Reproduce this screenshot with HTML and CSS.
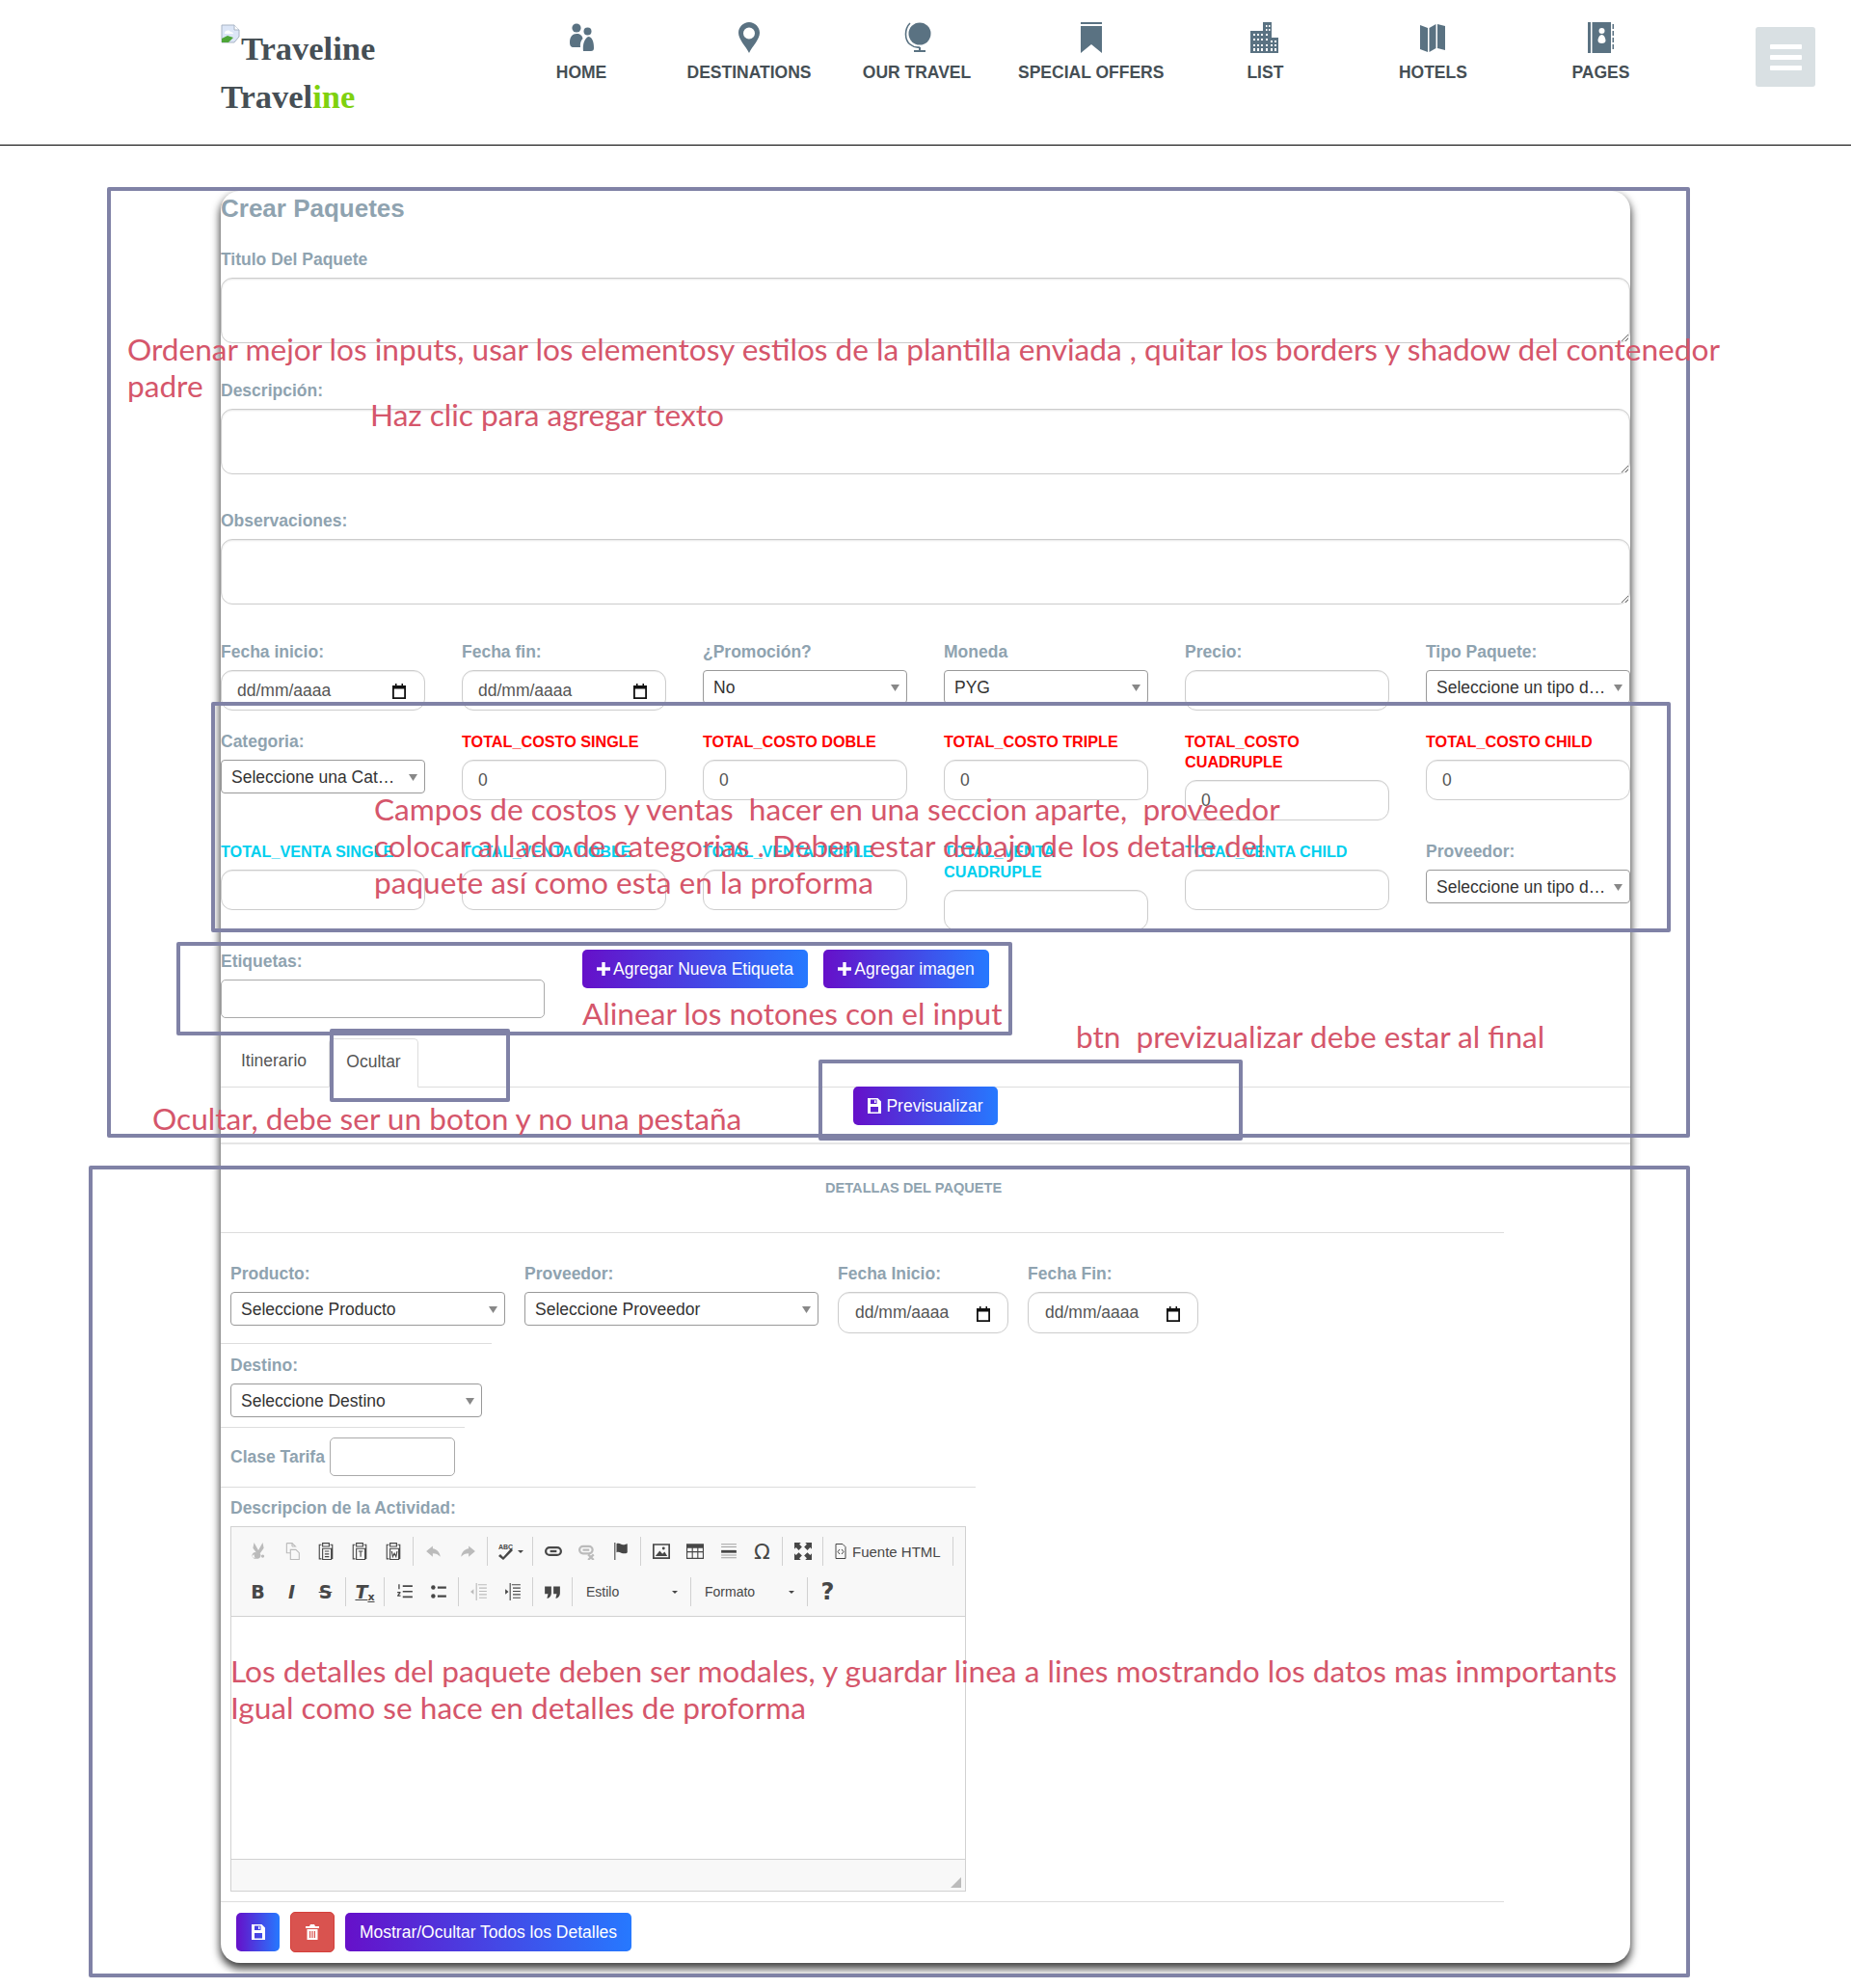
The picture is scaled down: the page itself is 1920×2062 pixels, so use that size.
FILE: index.html
```html
<!DOCTYPE html>
<html lang="es">
<head>
  <meta charset="UTF-8">
  <meta name="viewport" content="width=device-width, initial-scale=1.0">
  <title>Crear Paquetes - Traveline</title>
  <link rel="stylesheet" href="styles.css">
</head>
<body>
  <header class="header">
    <div class="logo">
      <div class="logo-alt">
        <svg class="broken-img" viewBox="0 0 20 20" width="20" height="20"><path d="M1 1h13l5 5v7l-5 6H1z" fill="#dce6f7" stroke="#a8b4c4"/><path d="M14 1v5h5" fill="#fff" stroke="#a8b4c4"/><path d="M4 9c1-3 5-3 6-1 2 0 3 1 3 2H4z" fill="#fff"/><path d="M1 19v-4l6-3 6 2-5 5z" fill="#4ea638"/></svg><span>Traveline</span>
      </div>
      <div class="logo-text">Travel<span class="logo-green">ine</span></div>
    </div>
    <nav class="nav">
      <a class="nav-item">
        <svg viewBox="0 0 32 32" width="32" height="32"><circle cx="11" cy="6" r="4.6"/><circle cx="22.5" cy="9.5" r="4"/><path d="M4 21c0-6 3-9 7-9s6 2 6.5 5c-2 2-3 5-2.500 9H8c-3 0-4-2-4-5z"/><path d="M18 30c-.8-6 .5-12 5-15 4.500 0 6 6 6 12 0 2-1 3-3 3z"/></svg>
        <span>HOME</span>
      </a>
      <a class="nav-item">
        <svg viewBox="0 0 32 32" width="32" height="32"><path fill-rule="evenodd" d="M16 0c6 0 11 5 11 11 0 7-7 13-11 21-4-8-11-14-11-21C5 5 10 0 16 0zm0 5.500a6 6 0 1 0 0 12 6 6 0 0 0 0-12z"/></svg>
        <span>DESTINATIONS</span>
      </a>
      <a class="nav-item">
        <svg viewBox="0 0 32 32" width="32" height="32"><circle cx="19" cy="12" r="11.500"/><path d="M9 1C3 7 3 18 9 23c3 2.500 7 3.500 10 3" fill="none" stroke="#5a7282" stroke-width="1.600"/><path d="M18 26h2v3h5v2H13v-2h5z"/></svg>
        <span>OUR TRAVEL</span>
      </a>
      <a class="nav-item">
        <svg viewBox="0 0 32 32" width="32" height="32"><path d="M5 0h22v2H5zM5 4h22v28l-11-9-11 9z"/></svg>
        <span>SPECIAL OFFERS</span>
      </a>
      <a class="nav-item">
        <svg viewBox="0 0 32 32" width="32" height="32"><path fill-rule="evenodd" d="M14 0h9v16h7v16H1V9h13zM17 3v2h1.500V3zM20 3v2h1.500V3zM17 7v2h1.500V7zM20 7v2h1.500V7zM4 12v2h2v-2zM8 12v2h2v-2zM12 12v2h2v-2zM17 12v2h2v-2zM4 17v2h2v-2zM8 17v2h2v-2zM12 17v2h2v-2zM17 17v2h2v-2zM22 19v2h2v-2zM26 19v2h2v-2zM4 23v2h2v-2zM8 23v2h2v-2zM12 23v2h2v-2zM17 23v2h2v-2zM22 23v2h2v-2zM26 23v2h2v-2zM4 27v3h2v-3zM8 27v3h2v-3zM12 27v3h2v-3zM17 27v3h2v-3zM22 27v3h2v-3zM26 27v3h2v-3z"/></svg>
        <span>LIST</span>
      </a>
      <a class="nav-item">
        <svg viewBox="0 0 32 32" width="32" height="32"><path d="M3 3l8 3v25l-8-3zM12.500 6l7-4v25l-7 4zM21 2l8 2v25l-8-2z"/></svg>
        <span>HOTELS</span>
      </a>
      <a class="nav-item">
        <svg viewBox="0 0 32 32" width="32" height="32"><path d="M3 0h3v32H3z"/><path fill-rule="evenodd" d="M7.500 0H27v32H7.500zM17.500 6a3 3 0 1 0 0 6 3 3 0 0 0 0-6zm0 7c-2.500 0-4 4-4 6 0 2 1.500 3 4 3s4-1 4-3c0-2-1.500-6-4-6z"/><path d="M28.500 2H30v5h-1.500zM28.500 9H30v5h-1.500zM28.500 16H30v5h-1.500zM28.500 23H30v5h-1.500z"/></svg>
        <span>PAGES</span>
      </a>
    </nav>
    <button class="menu-toggle"><i></i><i></i><i></i></button>
  </header>

  <main class="card">
    <h2 class="card-title">Crear Paquetes</h2>

    <div class="field field-text">
      <label>Titulo Del Paquete</label>
      <textarea></textarea>
    </div>
    <div class="field field-text field-mid">
      <label>Descripción:</label>
      <textarea></textarea>
    </div>
    <div class="field field-text">
      <label>Observaciones:</label>
      <textarea></textarea>
    </div>

    <div class="form-grid">
      <div class="field"><label>Fecha inicio:</label><div class="date-input"><span>dd/mm/aaaa</span><svg viewBox="0 0 14 16" width="14" height="16"><path fill-rule="evenodd" d="M3 0h1.500v2h5V0H11v2h3v14H0V2h3zM1.800 5.500v8.700h10.400V5.500z"/></svg></div></div>
      <div class="field"><label>Fecha fin:</label><div class="date-input"><span>dd/mm/aaaa</span><svg viewBox="0 0 14 16" width="14" height="16"><path fill-rule="evenodd" d="M3 0h1.500v2h5V0H11v2h3v14H0V2h3zM1.800 5.500v8.700h10.400V5.500z"/></svg></div></div>
      <div class="field"><label>¿Promoción?</label><select class="select"><option>No</option></select></div>
      <div class="field"><label>Moneda</label><select class="select"><option>PYG</option></select></div>
      <div class="field"><label>Precio:</label><input class="input" type="text"></div>
      <div class="field"><label>Tipo Paquete:</label><select class="select"><option>Seleccione un tipo de paquete</option></select></div>

      <div class="field"><label>Categoria:</label><select class="select"><option>Seleccione una Categoria</option></select></div>
      <div class="field"><label class="label-cost">TOTAL_COSTO SINGLE</label><input class="input" type="text" value="0"></div>
      <div class="field"><label class="label-cost">TOTAL_COSTO DOBLE</label><input class="input" type="text" value="0"></div>
      <div class="field"><label class="label-cost">TOTAL_COSTO TRIPLE</label><input class="input" type="text" value="0"></div>
      <div class="field"><label class="label-cost">TOTAL_COSTO CUADRUPLE</label><input class="input" type="text" value="0"></div>
      <div class="field"><label class="label-cost">TOTAL_COSTO CHILD</label><input class="input" type="text" value="0"></div>

      <div class="field"><label class="label-sale">TOTAL_VENTA SINGLE</label><input class="input" type="text"></div>
      <div class="field"><label class="label-sale">TOTAL_VENTA DOBLE</label><input class="input" type="text"></div>
      <div class="field"><label class="label-sale">TOTAL_VENTA TRIPLE</label><input class="input" type="text"></div>
      <div class="field"><label class="label-sale">TOTAL_VENTA CUADRUPLE</label><input class="input" type="text"></div>
      <div class="field"><label class="label-sale">TOTAL_VENTA CHILD</label><input class="input" type="text"></div>
      <div class="field"><label>Proveedor:</label><select class="select"><option>Seleccione un tipo de proveedor</option></select></div>
    </div>

    <div class="tags-row">
      <div class="tags-field">
        <label>Etiquetas:</label>
        <input class="input input-square" type="text">
      </div>
      <div class="tags-buttons">
        <button class="btn btn-tag"><svg viewBox="0 0 14 14" width="14" height="14"><path d="M5.300 0h3.400v5.300H14v3.400H8.700V14H5.300V8.700H0V5.300h5.300z"/></svg>Agregar Nueva Etiqueta</button>
        <button class="btn btn-image"><svg viewBox="0 0 14 14" width="14" height="14"><path d="M5.300 0h3.400v5.300H14v3.400H8.700V14H5.300V8.700H0V5.300h5.300z"/></svg>Agregar imagen</button>
      </div>
    </div>

    <div class="tabs">
      <a class="tab">Itinerario</a>
      <a class="tab tab-active">Ocultar</a>
    </div>
    <div class="tab-content">
      <button class="btn btn-preview"><svg class="icon-save" viewBox="0 0 14 16" width="14" height="16"><path fill-rule="evenodd" d="M0 0h10.500L14 3.500V16H0zM3 1.500v4.500h6.500V1.500zM7 2.300h1.500v2.800H7zM3 9v5.500h8V9z"/></svg>Previsualizar</button>
    </div>

    <hr class="rule rule-thick">
    <h5 class="details-title">DETALLAS DEL PAQUETE</h5>
    <hr class="rule rule-1560">

    <div class="detail-row detail-first">
      <div class="detail-field w-285"><label>Producto:</label><select class="select"><option>Seleccione Producto</option></select></div>
      <div class="detail-field w-305"><label>Proveedor:</label><select class="select"><option>Seleccione Proveedor</option></select></div>
      <div class="detail-field w-177"><label>Fecha Inicio:</label><div class="date-input date-small"><span>dd/mm/aaaa</span><svg viewBox="0 0 14 16" width="14" height="16"><path fill-rule="evenodd" d="M3 0h1.500v2h5V0H11v2h3v14H0V2h3zM1.800 5.500v8.700h10.400V5.500z"/></svg></div></div>
      <div class="detail-field w-177"><label>Fecha Fin:</label><div class="date-input date-small"><span>dd/mm/aaaa</span><svg viewBox="0 0 14 16" width="14" height="16"><path fill-rule="evenodd" d="M3 0h1.500v2h5V0H11v2h3v14H0V2h3zM1.800 5.500v8.700h10.400V5.500z"/></svg></div></div>
    </div>
    <hr class="rule rule-281 rule-destino">
    <div class="detail-row">
      <div class="detail-field w-261"><label>Destino:</label><select class="select"><option>Seleccione Destino</option></select></div>
    </div>
    <hr class="rule rule-253 rule-clase">
    <div class="detail-row detail-inline">
      <label>Clase Tarifa</label>
      <input class="input input-square input-tarifa" type="text">
    </div>
    <hr class="rule rule-783 rule-descr">

    <div class="editor-block">
      <label>Descripcion de la Actividad:</label>
      <div class="editor">
        <div class="editor-toolbar">
          <div class="tool-row">
            <span class="tool off"><svg viewBox="0 0 16 16"><path d="M4 0l4 7 4-7 1 5-3.500 5a3 3 0 1 1-1.500-1L8 9.500 7.500 10A3 3 0 1 1 6 9L3 5zM4 11a1.500 1.500 0 1 0 0 3 1.500 1.500 0 0 0 0-3zm8 0a1.500 1.500 0 1 0 0 3 1.500 1.500 0 0 0 0-3z"/></svg></span>
            <span class="tool off"><svg viewBox="0 0 16 16" class="line"><path d="M3 .5h5v3M8 .5l3 3H8M3 .5v9h3M6.500 6.500h5l3 3v6h-8z"/></svg></span>
            <span class="tool"><svg viewBox="0 0 16 16" class="line"><path d="M4 2H2v13h2M12 2h2v13M5 .5h6v3H5zM5 5.500h8v10H5zM7 8h4M7 10.500h4M7 13h4"/></svg></span>
            <span class="tool"><svg viewBox="0 0 16 16" class="line"><path d="M4 2H2v13h2M12 2h2v13M5 .5h6v3H5zM5 5.500h8v10H5zM7 8h4M9 8v5"/></svg></span>
            <span class="tool"><svg viewBox="0 0 16 16" class="line"><path d="M4 2H2v13h2M12 2h2v13M5 .5h6v3H5zM5 5.500h8v10H5zM6.500 8l1 5 1.500-3 1.500 3 1-5"/></svg></span>
            <i class="tool-sep"></i>
            <span class="tool off"><svg viewBox="0 0 16 16"><path d="M7 3L1 8l6 5v-3c3 0 5 1 7 3-.5-4-3-7-7-7.500z"/></svg></span>
            <span class="tool off"><svg viewBox="0 0 16 16"><path d="M9 3l6 5-6 5v-3c-3 0-5 1-7 3 .5-4 3-7 7-7.500z"/></svg></span>
            <i class="tool-sep"></i>
            <span class="tool tool-wide"><svg viewBox="0 0 18 18"><text x="1" y="7" class="spell-text" textLength="15">ABC</text><path d="M3 12l3 3 8-9 2 2L6 18l-5-4z"/></svg><b class="caret"></b></span>
            <i class="tool-sep"></i>
            <span class="tool"><svg viewBox="0 0 16 16" class="line line-2"><rect x="1" y="4.500" width="14" height="7" rx="3.500"/><path d="M5 8h6"/></svg></span>
            <span class="tool off"><svg viewBox="0 0 16 16" class="line line-2"><rect x="1" y="3.500" width="12" height="6.500" rx="3.250"/><path d="M4 6.750h6M9 11l5 5M14 11l-5 5"/></svg></span>
            <span class="tool"><svg viewBox="0 0 16 16"><path d="M2 0h1v16H2zM4 1c3-1 4 1 6 1s3-1 4-1v8c-1 1-2 1-4 1S7 8 4 9z"/></svg></span>
            <i class="tool-sep"></i>
            <span class="tool"><svg viewBox="0 0 16 16"><path fill-rule="evenodd" d="M0 1h16v14H0zM1.500 2.500v11h13v-11zM2.500 12.500l4-5 2.500 3 2-2 2.500 4zM10 4a1.300 1.300 0 1 1 0 2.600A1.300 1.300 0 0 1 10 4z"/></svg></span>
            <span class="tool"><svg viewBox="0 0 16 16"><path fill-rule="evenodd" d="M0 1h16v14H0zM1 5v3h4V5zM6 5v3h4V5zM11 5v3h4V5zM1 9v5h4V9zM6 9v5h4V9zM11 9v5h4V9z"/></svg></span>
            <span class="tool"><svg viewBox="0 0 16 16"><path d="M1 7h14v2.500H1z"/><path d="M1 1h14v1H1zM1 3.500h14v1H1zM1 11h14v1H1zM1 13.500h14v1H1z" opacity=".5"/></svg></span>
            <span class="tool tool-omega">Ω</span>
            <i class="tool-sep"></i>
            <span class="tool"><svg viewBox="0 0 16 16"><path d="M0 0h6L4.500 1.500 7 4 4 7 1.500 4.500 0 6zM16 0v6l-1.500-1.500L12 7 9 4l2.500-2.500L10 0zM0 16v-6l1.500 1.500L4 9l3 3-2.500 2.500L6 16zM16 16h-6l1.500-1.500L9 12l3-3 2.500 2.500L16 10z"/></svg></span>
            <i class="tool-sep"></i>
            <span class="tool-text"><svg viewBox="0 0 16 16" class="line" width="16" height="16"><path d="M3 .5h7l3 3v12H3zM7 6L5 8.500 7 11M9 6l2 2.500L9 11"/></svg>Fuente HTML</span>
            <i class="tool-sep"></i>
          </div>
          <div class="tool-row">
            <span class="tool tool-b">B</span>
            <span class="tool tool-i">I</span>
            <span class="tool tool-s">S</span>
            <i class="tool-sep"></i>
            <span class="tool tool-tx"><em>T</em><small>x</small></span>
            <i class="tool-sep"></i>
            <span class="tool"><svg viewBox="0 0 16 16"><path d="M6 2h9v1.500H6zM6 7h9v1.500H6zM6 12h9v1.500H6zM2 1h1.200v4.500H2zM1 8h3v1L2.500 11H4v1.300H1v-1L2.600 9.200H1z"/></svg></span>
            <span class="tool"><svg viewBox="0 0 16 16"><circle cx="3" cy="4" r="2"/><circle cx="3" cy="12" r="2"/><path d="M7 3h8v2H7zM7 11h8v2H7z"/></svg></span>
            <i class="tool-sep"></i>
            <span class="tool off"><svg viewBox="0 0 16 16"><path d="M7 1h8v1H7zM8 4h7v1H8zM8 7h7v1H8zM8 10h7v1H8zM8 13h7v1H8zM5 0h1v16H5zM0 8l3-2.500v5z"/></svg></span>
            <span class="tool"><svg viewBox="0 0 16 16"><path d="M7 1h8v1H7zM8 4h7v1H8zM8 7h7v1H8zM8 10h7v1H8zM8 13h7v1H8zM5 0h1v16H5zM4 8L1 5.500v5z"/></svg></span>
            <i class="tool-sep"></i>
            <span class="tool tool-narrow"><svg viewBox="0 0 16 16"><path d="M1 3h6v6c0 3-2 5-4 5l1-4H1zM9 3h6v6c0 3-2 5-4 5l1-4H9z"/></svg></span>
            <i class="tool-sep"></i>
            <span class="tool-combo combo-style">Estilo<b class="caret"></b></span>
            <i class="tool-sep"></i>
            <span class="tool-combo combo-format">Formato<b class="caret"></b></span>
            <i class="tool-sep"></i>
            <span class="tool tool-help">?</span>
          </div>
        </div>
        <div class="editor-body"></div>
        <div class="editor-foot"><svg viewBox="0 0 12 12" width="12" height="12"><path d="M12 1v11H1z" fill="#bbb"/></svg></div>
      </div>
    </div>

    <hr class="rule rule-1560 rule-foot">
    <div class="foot-buttons">
      <button class="btn btn-icon"><svg class="icon-save" viewBox="0 0 14 16" width="14" height="16"><path fill-rule="evenodd" d="M0 0h10.500L14 3.500V16H0zM3 1.500v4.500h6.500V1.500zM7 2.300h1.500v2.800H7zM3 9v5.500h8V9z"/></svg></button>
      <button class="btn btn-danger"><svg viewBox="0 0 14 16" width="14" height="16"><path fill-rule="evenodd" d="M5 0h4l1 2h4v2H0V2h4zM1.500 5h11v11h-11zM4 7v7h1.200V7zM6.400 7v7h1.200V7zM8.800 7v7H10V7z"/></svg></button>
      <button class="btn btn-toggle">Mostrar/Ocultar Todos los Detalles</button>
    </div>
  </main>

  <!-- anotaciones de revision sobre la captura -->
  <div class="note-box box-main"></div>
  <div class="note-box box-costs"></div>
  <div class="note-box box-tags"></div>
  <div class="note-box box-tab"></div>
  <div class="note-box box-preview"></div>
  <div class="note-box box-details"></div>

  <p class="note note-order">Ordenar mejor los inputs, usar los elementosy estilos de la plantilla enviada , quitar los borders y shadow del contenedor
padre</p>
  <p class="note note-click">Haz clic para agregar texto</p>
  <p class="note note-costs">Campos de costos y ventas  hacer en una seccion aparte,  proveedor
colocar al lado de categorias . Deben estar debajo de los detalle del
paquete así como esta en la proforma</p>
  <p class="note note-align">Alinear los notones con el input</p>
  <p class="note note-preview">btn  previzualizar debe estar al final</p>
  <p class="note note-hide">Ocultar, debe ser un boton y no una pestaña</p>
  <p class="note note-modal">Los detalles del paquete deben ser modales, y guardar linea a lines mostrando los datos mas inmportants
Igual como se hace en detalles de proforma</p>
</body>
</html>
```

FILE: styles.css
```css
* {
  box-sizing: border-box;
}
body {
  margin: 0;
  height: 2062px;
  position: relative;
  overflow: hidden;
  background: #fff;
  font-family: "Liberation Sans", Arial, sans-serif;
  font-size: 16px;
  color: #333;
}

/* header */
.header {
  height: 151px;
  border-bottom: 1px solid #000;
  display: flex;
  align-items: flex-start;
  padding-left: 229px;
}
.logo {
  width: 287px;
  padding-top: 25px;
  font-family: "Liberation Serif", serif;
  font-size: 34.5px;
  font-weight: bold;
  color: #464f55;
  line-height: 50px;
}
.logo-alt {
  display: flex;
  align-items: flex-start;
}
.broken-img {
  margin-right: 1px;
}
.logo-green {
  color: #7fd10f;
}
.nav {
  display: flex;
  padding-top: 23px;
}
.nav-item {
  min-width: 174px;
  padding: 0 18px;
  display: flex;
  flex-direction: column;
  align-items: center;
  font-size: 17.5px;
  font-weight: bold;
  color: #464f55;
  line-height: 20px;
}
.nav-item svg {
  fill: #5a7282;
  margin-bottom: 10px;
}
.menu-toggle {
  margin: 28px 0 0 74px;
  width: 62px;
  height: 62px;
  border: none;
  border-radius: 3px;
  background: #d9e0e3;
  display: flex;
  flex-direction: column;
  align-items: center;
  justify-content: center;
  gap: 6px;
  padding: 0;
}
.menu-toggle i {
  width: 33px;
  height: 5px;
  background: #fff;
  border-radius: 1px;
}

/* tarjeta */
.card {
  width: 1462px;
  height: 1838px;
  margin: 47px 0 0 229px;
  border-radius: 20px;
  background: #fff;
  box-shadow: 0 5px 9px 1px rgba(0, 0, 0, 0.75);
}
.card-title {
  margin: 0;
  height: 36px;
  font-size: 26px;
  line-height: 36px;
  color: #8fa3b0;
}
label {
  display: block;
  font-size: 17.5px;
  font-weight: bold;
  line-height: 21px;
  color: #8fa3b0;
  margin-bottom: 8px;
}
.field-text:first-of-type {
  margin-top: 25px;
}
.field-text textarea {
  display: block;
  width: 100%;
  height: 68px;
  margin-bottom: 39px;
  border: 1px solid #ccc;
  border-radius: 12px;
  box-shadow: inset 0 1px 2px rgba(0, 0, 0, 0.1);
  background: #fff;
}
.field-mid textarea {
  margin-bottom: 38px;
}
.form-grid {
  display: grid;
  grid-template-columns: repeat(6, 212px);
  column-gap: 38px;
  align-items: start;
}
.form-grid .field {
  margin-bottom: 22px;
}
.label-cost {
  color: #f00;
  font-size: 16.2px;
}
.label-sale {
  color: #00cfee;
  font-size: 16.2px;
}
.input,
.date-input {
  display: flex;
  width: 100%;
  height: 42px;
  border: 1px solid #ccc;
  border-radius: 12px;
  padding: 0 16px;
  font-family: inherit;
  font-size: 17.5px;
  color: #555;
  background: #fff;
  box-shadow: inset 0 1px 1px rgba(0, 0, 0, 0.075);
}
.date-input {
  align-items: center;
  justify-content: space-between;
  padding-right: 19px;
}
.date-input svg {
  fill: #111;
  margin-top: 2px;
}
.select {
  display: block;
  width: 100%;
  height: 35px;
  border: 1px solid #999;
  border-radius: 4px;
  padding: 0 22px 0 10px;
  font-family: inherit;
  font-size: 17.5px;
  color: #333;
  text-overflow: ellipsis;
  appearance: none;
  background: #fff url("data:image/svg+xml,%3Csvg xmlns='http://www.w3.org/2000/svg' width='10' height='8'%3E%3Cpath d='M0 1h9L4.500 8z' fill='%23888'/%3E%3C/svg%3E") no-repeat right 6px center;
}

/* etiquetas */
.tags-row {
  display: flex;
  height: 90px;
}
.tags-field {
  width: 336px;
  flex: none;
}
.input-square {
  height: 40px;
  border-radius: 5px;
  border-color: #aaa;
  box-shadow: none;
}
.tags-buttons {
  display: flex;
  gap: 16px;
  margin: -2px 0 0 39px;
}
.btn {
  height: 40px;
  border: none;
  border-radius: 5px;
  background: linear-gradient(to right, #6610c9, #2679ff);
  color: #fff;
  font-family: inherit;
  font-size: 17.5px;
  display: flex;
  align-items: center;
  justify-content: center;
  padding: 0;
}
.btn svg {
  fill: #fff;
}
.btn-tag {
  width: 234px;
}
.btn-tag svg,
.btn-image svg {
  margin-right: 3px;
}
.btn-image {
  width: 172px;
}

/* pestañas */
.tabs {
  display: flex;
  height: 51px;
  border-bottom: 1px solid #ddd;
}
.tab {
  width: 110px;
  padding-top: 13px;
  text-align: center;
  font-size: 17.5px;
  color: #555;
}
.tab-active {
  width: 93px;
  margin-left: 2px;
  border: 1px solid #ddd;
  border-bottom: 1px solid #fff;
  border-radius: 5px 5px 0 0;
  height: 51px;
}
.tab-content {
  padding-left: 656px;
  height: 58px;
}
.btn-preview {
  width: 150px;
  margin-top: -1px;
}
.btn-preview svg {
  margin-right: 5px;
}
.rule {
  margin: 0;
  border: none;
  border-top: 1px solid #ddd;
  height: 0;
}
.rule-thick {
  border-top: 2px solid #e5e5e5;
}
.details-title {
  margin: 0;
  height: 91px;
  padding: 36px 0 0 627px;
  font-size: 14.6px;
  line-height: 18px;
  color: #8fa3b0;
}
.rule-1560 {
  width: 1331px;
}
.detail-row {
  display: flex;
  gap: 20px;
  padding-left: 10px;
  margin-top: 12px;
}
.detail-first {
  margin-top: 32px;
}
.detail-field label {
  margin-bottom: 8px;
}
.w-285 {
  width: 285px;
}
.w-305 {
  width: 305px;
}
.w-177 {
  width: 177px;
}
.w-261 {
  width: 261px;
}
.date-small {
  padding: 0 18px 0 17px;
  height: 43px;
}
.rule-281 {
  width: 281px;
}
.rule-253 {
  width: 253px;
}
.rule-783 {
  width: 783px;
}
.rule-destino {
  margin-top: 10px;
}
.rule-clase {
  margin-top: 10px;
}
.detail-inline {
  align-items: center;
  gap: 5px;
  margin-top: 10px;
}
.detail-inline label {
  margin: 0;
}
.input-tarifa {
  width: 130px;
}
.rule-descr {
  margin-top: 11px;
}

/* editor */
.editor-block {
  padding: 11px 0 0 10px;
}
.editor {
  width: 763px;
  border: 1px solid #d1d1d1;
}
.editor-toolbar {
  height: 93px;
  padding: 4px 0 0 10px;
  background: #f8f8f8;
  border-bottom: 1px solid #d1d1d1;
}
.tool-row {
  display: flex;
  align-items: center;
  height: 42px;
}
.tool {
  width: 35px;
  height: 24px;
  display: flex;
  align-items: center;
  justify-content: center;
  color: #474747;
  fill: #474747;
  font-weight: bold;
}
.tool svg {
  width: 18px;
  height: 18px;
}
.tool.off {
  fill: #bbb;
  color: #bbb;
}
.line {
  fill: none;
  stroke: #474747;
  stroke-width: 1;
}
.tool.off .line {
  stroke: #bbb;
}
.line-2 {
  stroke-width: 2;
}
.tool-sep {
  width: 1px;
  height: 30px;
  margin: 0 3px;
  background: #d1d1d1;
}
.tool-wide {
  width: 40px;
  gap: 3px;
}
.tool-narrow {
  width: 34px;
}
.spell-text {
  font-size: 7px;
  font-weight: bold;
  font-family: "Liberation Sans", sans-serif;
}
.caret {
  display: inline-block;
  width: 0;
  height: 0;
  border: 3px solid transparent;
  border-top-color: #474747;
  border-bottom: none;
}
.tool-omega {
  font-size: 22px;
  font-family: "DejaVu Sans", sans-serif;
  font-weight: normal;
}
.tool-text {
  display: flex;
  align-items: center;
  gap: 4px;
  padding: 0 9px 0 7px;
  font-size: 15px;
  color: #474747;
}
.tool-b,
.tool-i,
.tool-s {
  font-size: 19px;
  font-family: "DejaVu Sans", sans-serif;
}
.tool-i {
  font-style: italic;
}
.tool-s {
  text-decoration: line-through;
}
.tool-tx {
  width: 33px;
  font-size: 19px;
  font-family: "DejaVu Sans", sans-serif;
  text-decoration: underline;
}
.tool-tx em {
  font-weight: bold;
}
.tool-tx small {
  font-size: 11px;
  align-self: flex-end;
}
.tool-combo {
  display: flex;
  align-items: center;
  justify-content: space-between;
  font-size: 14px;
  color: #474747;
  padding: 0 10px 0 11px;
}
.combo-style {
  width: 116px;
}
.combo-format {
  width: 114px;
}
.tool-help {
  font-size: 24px;
  font-family: "DejaVu Sans", sans-serif;
}
.editor-body {
  height: 251px;
  background: #fff;
}
.editor-foot {
  height: 33px;
  background: #f8f8f8;
  border-top: 1px solid #d1d1d1;
  display: flex;
  justify-content: flex-end;
  align-items: flex-end;
  padding: 0 4px 3px 0;
}
.rule-foot {
  margin-top: 10px;
}
.foot-buttons {
  display: flex;
  align-items: center;
  gap: 11px;
  padding: 10px 0 0 16px;
}
.btn-icon {
  width: 45px;
}
.btn-danger {
  width: 46px;
  height: 42px;
  background: #d9534f;
  border: 1px solid #d43f3a;
}
.btn-toggle {
  width: 297px;
}

/* anotaciones */
.note-box {
  position: absolute;
  border: 4px solid #8082a6;
  border-radius: 2px;
}
.box-main {
  left: 111px;
  top: 194px;
  width: 1642px;
  height: 986px;
}
.box-costs {
  left: 219px;
  top: 728px;
  width: 1514px;
  height: 239px;
}
.box-tags {
  left: 183px;
  top: 977px;
  width: 867px;
  height: 97px;
}
.box-tab {
  left: 342px;
  top: 1067px;
  width: 187px;
  height: 76px;
}
.box-preview {
  left: 849px;
  top: 1099px;
  width: 440px;
  height: 84px;
}
.box-details {
  left: 92px;
  top: 1209px;
  width: 1661px;
  height: 842px;
}
.note {
  position: absolute;
  margin: 0;
  white-space: pre;
  font-family: Lato, sans-serif;
  font-size: 31.6px;
  line-height: 38px;
  color: #d5566b;
}
.note-order {
  left: 132px;
  top: 343px;
}
.note-click {
  left: 384px;
  top: 411px;
}
.note-costs {
  left: 388px;
  top: 820px;
}
.note-align {
  left: 604px;
  top: 1032px;
}
.note-preview {
  left: 1116px;
  top: 1056px;
}
.note-hide {
  left: 158px;
  top: 1141px;
}
.note-modal {
  left: 239px;
  top: 1714px;
}
```
